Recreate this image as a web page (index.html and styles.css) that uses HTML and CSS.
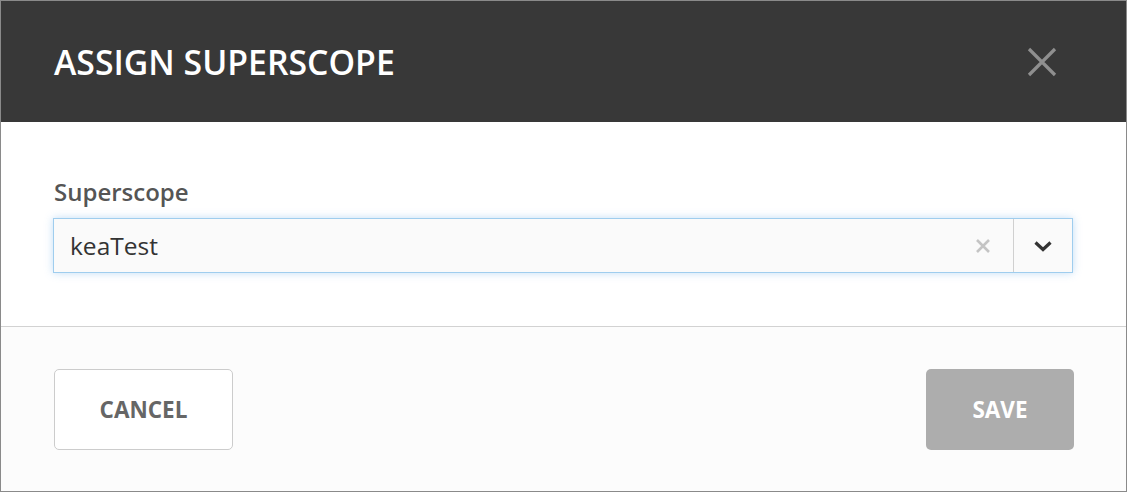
FILE: index.html
```html
<!DOCTYPE html>
<html>
<head>
<meta charset="utf-8">
<link rel="stylesheet" href="styles.css">
</head>
<body>
<div class="dialog">
  <div class="header">
    <h1 class="title">ASSIGN SUPERSCOPE</h1>
    <button class="close" aria-label="Close">
      <svg width="30" height="30" viewBox="0 0 30 30"><path d="M2 2 L28 28 M28 2 L2 28" stroke="#8f8f8f" stroke-width="3.2" fill="none"/></svg>
    </button>
  </div>
  <div class="body">
    <label class="label">Superscope</label>
    <div class="select">
      <span class="value">keaTest</span>
      <span class="clear">
        <svg width="16" height="16" viewBox="0 0 16 16"><path d="M2 2 L14 14 M14 2 L2 14" stroke="#c4c4c4" stroke-width="2.6" fill="none"/></svg>
      </span>
      <span class="arrow">
        <svg width="20" height="12" viewBox="0 0 20 12"><path d="M2.5 2.5 L10 9.5 L17.5 2.5" stroke="#333" stroke-width="3.2" fill="none"/></svg>
      </span>
    </div>
  </div>
  <div class="footer">
    <button class="btn cancel">CANCEL</button>
    <button class="btn save">SAVE</button>
  </div>
</div>
</body>
</html>
```
FILE: styles.css
```css
html, body {
  margin: 0;
  padding: 0;
  background: #ffffff;
}
.dialog {
  width: 1127px;
  height: 492px;
  box-sizing: border-box;
  border: 1px solid #8a8a8a;
  display: flex;
  flex-direction: column;
  font-family: "Open Sans", "Liberation Sans", sans-serif;
  background: #fcfcfc;
}
.header {
  height: 121px;
  background: #383838;
  display: flex;
  align-items: center;
  justify-content: space-between;
  padding: 0 69px 0 53px;
  flex: none;
}
.title {
  margin: 0;
  color: #ffffff;
  font-size: 33.8px;
  font-weight: 600;
}
.close {
  background: none;
  border: none;
  padding: 0;
  width: 30px;
  height: 30px;
  display: flex;
}
.body {
  background: #ffffff;
  height: 205px;
  flex: none;
  border-bottom: 1px solid #d2d2d2;
  padding: 0 53px 0 52px;
  box-sizing: border-box;
  padding-top: 53px;
}
.label {
  display: block;
  color: #555555;
  font-size: 24px;
  font-weight: 600;
  line-height: 34px;
  margin-left: 1px;
  margin-bottom: 9px;
}
.select {
  height: 55px;
  box-sizing: border-box;
  border: 1px solid #9fcdee;
  box-shadow: 0 0 8px rgba(120, 180, 235, 0.45);
  background: #fafafa;
  display: flex;
  align-items: center;
}
.value {
  flex: 1;
  padding-left: 16px;
  font-size: 24.5px;
  color: #333333;
}
.clear {
  width: 60px;
  display: flex;
  justify-content: center;
  align-items: center;
  height: 100%;
}
.arrow {
  width: 58px;
  height: 100%;
  border-left: 1px solid #d0d0d0;
  display: flex;
  justify-content: center;
  align-items: center;
}
.footer {
  flex: 1;
  display: flex;
  justify-content: space-between;
  align-items: flex-start;
  padding: 42px 52px 0 53px;
}
.btn {
  height: 81px;
  border-radius: 5px;
  font-family: "Open Sans", "Liberation Sans", sans-serif;
  font-size: 22.5px;
  font-weight: 700;
  padding: 0;
}
.cancel {
  width: 179px;
  background: #ffffff;
  border: 1px solid #cccccc;
  color: #666666;
}
.save {
  width: 148px;
  background: #adadad;
  border: none;
  color: #ffffff;
}
```
